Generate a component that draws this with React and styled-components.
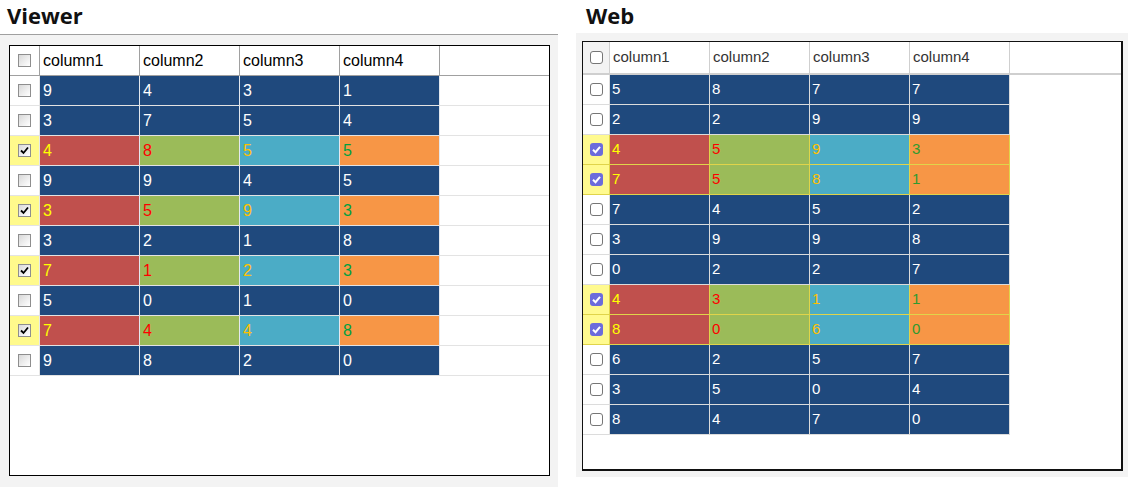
import React from 'react';
import styled, { createGlobalStyle } from 'styled-components';

const Global = createGlobalStyle`
  html, body { margin: 0; padding: 0; background: #fff; }
  body { font-family: "Liberation Sans", Arial, sans-serif; }
  * { box-sizing: border-box; }
`;

const viewerData = [
  [[9, 4, 3, 1], false],
  [[3, 7, 5, 4], false],
  [[4, 8, 5, 5], true],
  [[9, 9, 4, 5], false],
  [[3, 5, 9, 3], true],
  [[3, 2, 1, 8], false],
  [[7, 1, 2, 3], true],
  [[5, 0, 1, 0], false],
  [[7, 4, 4, 8], true],
  [[9, 8, 2, 0], false],
];

const webData = [
  [[5, 8, 7, 7], false],
  [[2, 2, 9, 9], false],
  [[4, 5, 9, 3], true],
  [[7, 5, 8, 1], true],
  [[7, 4, 5, 2], false],
  [[3, 9, 9, 8], false],
  [[0, 2, 2, 7], false],
  [[4, 3, 1, 1], true],
  [[8, 0, 6, 0], true],
  [[6, 2, 5, 7], false],
  [[3, 5, 0, 4], false],
  [[8, 4, 7, 0], false],
];

const NAVY = '#1f497d';
const hiBg = ['#c0504d', '#9bbb59', '#4bacc6', '#f79646'];
const hiFg = ['#ffff00', '#ff0000', '#ffc000', '#00a040'];
const webHiFg = ['#ffff00', '#ff0000', '#ffc000', '#2f9a2f'];
const columns = ['column1', 'column2', 'column3', 'column4'];

const Page = styled.div`
  display: flex;
  align-items: flex-start;
  width: 1134px;
  height: 487px;
  overflow: hidden;
`;

const Section = styled.section`
  display: flex;
  flex-direction: column;
  width: ${(p) => p.$w}px;
  margin-left: ${(p) => p.$ml || 0}px;
`;

const Heading = styled.h2`
  margin: 0;
  height: ${(p) => p.$h}px;
  padding-left: ${(p) => p.$pl}px;
  font-family: "Open Sans", sans-serif;
  font-weight: 700;
  font-size: 22px;
  line-height: 30px;
  color: #111;
`;

const ViewerPanel = styled.div`
  height: 453px;
  border-top: 1px solid #a0a0a0;
  background: #f3f3f3;
  padding: 10px 8px 11px 9px;
`;

const WebPanel = styled.div`
  height: 444px;
  background: #f3f3f3;
  padding: 8px 5px 6px 6px;
`;

const ViewerFrame = styled.div`
  width: 541px;
  height: 431px;
  border: 1px solid #000;
  background: #fff;
  display: flex;
  flex-direction: column;
  font-size: 16px;
`;

const WebFrame = styled.div`
  width: 541px;
  height: 430px;
  border: 1px solid #111;
  border-right-width: 2px;
  border-bottom-width: 2px;
  background: #fff;
  display: flex;
  flex-direction: column;
  font-size: 15px;
`;

const Row = styled.div`
  display: flex;
  flex: none;
  height: ${(p) => p.$h}px;
  border-bottom: ${(p) => (p.$line ? `${p.$lw || 1}px solid ${p.$line}` : 'none')};
`;

const CheckCell = styled.div`
  flex: none;
  width: ${(p) => p.$w}px;
  height: 100%;
  display: flex;
  align-items: center;
  justify-content: center;
  background: ${(p) => p.$bg};
  border-right: 1px solid ${(p) => p.$line};
  border-bottom: ${(p) => (p.$bottom ? `1px solid ${p.$bottom}` : 'none')};
`;

const Cell = styled.div`
  flex: none;
  width: 100px;
  height: 100%;
  display: flex;
  align-items: center;
  padding-left: ${(p) => p.$pad}px;
  padding-bottom: ${(p) => p.$pb || 0}px;
  background: ${(p) => p.$bg};
  color: ${(p) => p.$fg};
  border-right: 1px solid ${(p) => p.$line};
  border-bottom: ${(p) => (p.$bottom ? `1px solid ${p.$bottom}` : 'none')};
`;

const Filler = styled.div`
  flex: 1;
  height: 100%;
`;

const ClassicBox = styled.span`
  width: 13px;
  height: 13px;
  border: 1px solid #8e8e8e;
  background: linear-gradient(135deg, #d8d8d8 0%, #f4f4f4 70%, #fff 100%);
  display: flex;
  align-items: center;
  justify-content: center;
`;

const WebBox = styled.span`
  width: 13px;
  height: 13px;
  border-radius: 3px;
  border: ${(p) => (p.$checked ? 'none' : '1px solid #767676')};
  background: ${(p) => (p.$checked ? '#6c6cdc' : '#fff')};
  display: flex;
  align-items: center;
  justify-content: center;
`;

const ClassicCheckbox = ({ checked }) => (
  <ClassicBox>
    {checked && (
      <svg width="9" height="9" viewBox="0 0 9 9">
        <path d="M1 4.5 L3.5 7 L8 1.5" fill="none" stroke="#000" strokeWidth="1.8" />
      </svg>
    )}
  </ClassicBox>
);

const WebCheckbox = ({ checked }) => (
  <WebBox $checked={checked}>
    {checked && (
      <svg width="11" height="11" viewBox="0 0 11 11">
        <path d="M2 5.8 L4.5 8.2 L9 2.8" fill="none" stroke="#fff" strokeWidth="2" />
      </svg>
    )}
  </WebBox>
);

const Viewer = () => (
  <ViewerFrame>
    <Row $h={30} $line="#a0a0a0">
      <CheckCell $w={30} $bg="#fff" $line="#a0a0a0">
        <ClassicCheckbox />
      </CheckCell>
      {columns.map((c) => (
        <Cell key={c} $pad={3} $bg="#fff" $fg="#000" $line="#a0a0a0">
          {c}
        </Cell>
      ))}
      <Filler />
    </Row>
    {viewerData.map(([vals, hi], i) => (
      <Row key={i} $h={30} $line="#e3e3e3">
        <CheckCell $w={30} $bg={hi ? '#fffa8c' : '#fff'} $line="#e6e6e6">
          <ClassicCheckbox checked={hi} />
        </CheckCell>
        {vals.map((v, j) => (
          <Cell
            key={j}
            $pad={3}
            $bg={hi ? hiBg[j] : NAVY}
            $fg={hi ? hiFg[j] : '#fff'}
            $line="#e4e8ee"
          >
            {v}
          </Cell>
        ))}
        <Filler />
      </Row>
    ))}
  </ViewerFrame>
);

const Web = () => (
  <WebFrame>
    <Row $h={33} $line="#cfcfcf" $lw={2}>
      <CheckCell $w={27} $bg="#f3f3f3" $line="#cfcfcf">
        <WebCheckbox />
      </CheckCell>
      {columns.map((c) => (
        <Cell key={c} $pad={3} $pb={2} $bg="#fff" $fg="#333" $line="#cfcfcf">
          {c}
        </Cell>
      ))}
      <Filler />
    </Row>
    {webData.map(([vals, hi], i) => {
      const line = hi ? '#e0d44a' : '#dcdcdc';
      return (
        <Row key={i} $h={30}>
          <CheckCell $w={27} $bg={hi ? '#fffa8f' : '#fff'} $line={line} $bottom={line}>
            <WebCheckbox checked={hi} />
          </CheckCell>
          {vals.map((v, j) => (
            <Cell
              key={j}
              $pad={2}
              $pb={2}
              $bg={hi ? hiBg[j] : NAVY}
              $fg={hi ? webHiFg[j] : '#fff'}
              $line={hi ? '#e0d44a' : '#dcdcdc'}
              $bottom={line}
            >
              {v}
            </Cell>
          ))}
          <Filler />
        </Row>
      );
    })}
  </WebFrame>
);

export default function App() {
  return (
    <>
      <Global />
      <Page>
        <Section $w={558}>
          <Heading $h={34} $pl={7}>Viewer</Heading>
          <ViewerPanel>
            <Viewer />
          </ViewerPanel>
        </Section>
        <Section $w={552} $ml={18}>
          <Heading $h={33} $pl={10}>Web</Heading>
          <WebPanel>
            <Web />
          </WebPanel>
        </Section>
      </Page>
    </>
  );
}
